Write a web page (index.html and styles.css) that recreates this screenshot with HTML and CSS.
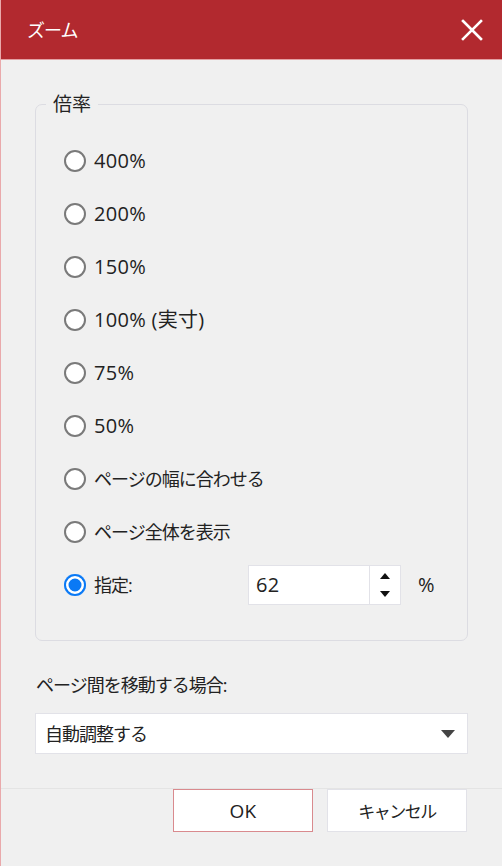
FILE: index.html
```html
<!DOCTYPE html>
<html lang="ja">

<head>
    <meta charset="UTF-8">
    <meta name="viewport" content="width=device-width, initial-scale=1.0">
    <title>ズーム</title>
    <link rel="stylesheet" href="styles.css">
</head>

<body>
    <!-- Title bar -->
    <div class="titlebar">
        <span class="title">ズーム</span>
        <button class="close-btn" aria-label="閉じる">
            <svg width="22" height="22" viewBox="0 0 22 22">
                <path d="M2 2 L20 20 M20 2 L2 20" stroke="#fff" stroke-width="2.6" stroke-linecap="square" fill="none" />
            </svg>
        </button>
    </div>

    <div class="dialog-body">
        <fieldset class="zoom-group">
            <legend>倍率</legend>
            <label class="radio-row"><input type="radio" name="zoom"><span class="radio-dot"></span><span class="latin">400%</span></label>
            <label class="radio-row"><input type="radio" name="zoom"><span class="radio-dot"></span><span class="latin">200%</span></label>
            <label class="radio-row"><input type="radio" name="zoom"><span class="radio-dot"></span><span class="latin">150%</span></label>
            <label class="radio-row"><input type="radio" name="zoom"><span class="radio-dot"></span><span class="latin">100% (実寸)</span></label>
            <label class="radio-row"><input type="radio" name="zoom"><span class="radio-dot"></span><span class="latin">75%</span></label>
            <label class="radio-row"><input type="radio" name="zoom"><span class="radio-dot"></span><span class="latin">50%</span></label>
            <label class="radio-row"><input type="radio" name="zoom"><span class="radio-dot"></span><span>ページの幅に合わせる</span></label>
            <label class="radio-row"><input type="radio" name="zoom"><span class="radio-dot"></span><span>ページ全体を表示</span></label>
            <div class="radio-row">
                <label class="custom-label"><input type="radio" name="zoom" checked><span class="radio-dot"></span><span>指定:</span></label>
                <div class="spin-box">
                    <span class="spin-value latin">62</span>
                    <div class="spin-buttons">
                        <svg width="12" height="8" viewBox="0 0 12 8"><path d="M1 7 L6 1 L11 7 Z" fill="#111" /></svg>
                        <svg width="12" height="8" viewBox="0 0 12 8"><path d="M1 1 L6 7 L11 1 Z" fill="#111" /></svg>
                    </div>
                </div>
                <span class="percent latin">%</span>
            </div>
        </fieldset>

        <p class="move-label">ページ間を移動する場合:</p>
        <div class="select-box">
            <span>自動調整する</span>
            <svg width="14" height="8" viewBox="0 0 14 8"><path d="M0 0 L14 0 L7 8 Z" fill="#444" /></svg>
        </div>
    </div>

    <div class="dialog-footer">
        <button class="btn btn-ok latin">OK</button>
        <button class="btn btn-cancel">キャンセル</button>
    </div>
</body>

</html>
```

FILE: styles.css
```css
/* Basic Reset */
* {
    margin: 0;
    padding: 0;
    box-sizing: border-box;
}

body {
    font-family: "Open Sans", "Noto Sans CJK JP", sans-serif;
    font-size: 18px;
    letter-spacing: -1px;
    color: #222;
    background-color: #f0f0f0;
    width: 502px;
    height: 866px;
    overflow: hidden;
    border-left: 1px solid #e9a9ab;
}

/* Latin text (digits, %, OK) is drawn a little larger, like the Windows UI font */
.latin {
    font-size: 20px;
    letter-spacing: 0.3px;
}

/* Title bar */
.titlebar {
    height: 60px;
    margin-left: -1px;
    background-color: #b2292f;
    border-bottom: 1px solid #e3a0a3;
    display: flex;
    align-items: center;
    justify-content: space-between;
    padding: 0 18px 0 27px;
}

.title {
    color: #fff;
    line-height: 24px;
}

.close-btn {
    background: none;
    border: none;
    width: 24px;
    height: 24px;
    display: flex;
    align-items: center;
    justify-content: center;
    cursor: pointer;
}

/* Body */
.dialog-body {
    padding: 32px 34px 0 34px;
}

.zoom-group {
    border: 1px solid #dcdce2;
    border-radius: 7px;
    padding: 18px 20px 29px 28px;
}

.zoom-group legend {
    margin-left: -18px;
    padding: 0 7px;
    font-size: 19px;
    letter-spacing: 0;
    line-height: 24px;
}

.radio-row {
    height: 53px;
    display: flex;
    align-items: center;
    line-height: 24px;
    cursor: pointer;
}

.radio-row input,
.custom-label input {
    display: none;
}

.custom-label {
    display: flex;
    align-items: center;
    width: 184px;
}

.radio-dot {
    width: 22px;
    height: 22px;
    border-radius: 50%;
    background: #fff;
    border: 2px solid #7a7a7a;
    margin-right: 8px;
    flex-shrink: 0;
}

input:checked + .radio-dot {
    background: #0a79f5;
    border: none;
    box-shadow: inset 0 0 0 2px #0a79f5, inset 0 0 0 4.5px #fff;
}

.spin-box {
    display: flex;
    width: 153px;
    height: 40px;
    background: #fff;
    border: 1px solid #e2e2e8;
}

.spin-value {
    flex: 1;
    display: flex;
    align-items: center;
    padding-left: 7px;
}

.spin-buttons {
    width: 31px;
    border-left: 1px solid #e2e2e8;
    display: flex;
    flex-direction: column;
    align-items: center;
    justify-content: center;
    gap: 10px;
}

.spin-buttons svg {
    display: block;
}

.percent {
    margin-left: 17px;
}

.move-label {
    margin-top: 31px;
    line-height: 26px;
    padding-left: 1px;
}

.select-box {
    margin-top: 15px;
    height: 41px;
    background: #fff;
    border: 1px solid #e2e2e8;
    display: flex;
    align-items: center;
    justify-content: space-between;
    padding: 0 12px 0 9px;
    line-height: 24px;
}

/* Footer */
.dialog-footer {
    margin-top: 34px;
    margin-left: -1px;
    border-top: 1px solid #e4e4e4;
    display: flex;
    justify-content: flex-end;
    gap: 14px;
    padding: 0 35px 0 0;
}

.btn {
    width: 140px;
    height: 43px;
    background: #fff;
    border: 1px solid #e2e2e8;
    font-family: inherit;
    color: #222;
    cursor: pointer;
}

.btn-ok {
    font-size: 19px;
    border-color: #d98a8e;
}

.btn-cancel {
    font-size: 17px;
    letter-spacing: -1.5px;
}
```
